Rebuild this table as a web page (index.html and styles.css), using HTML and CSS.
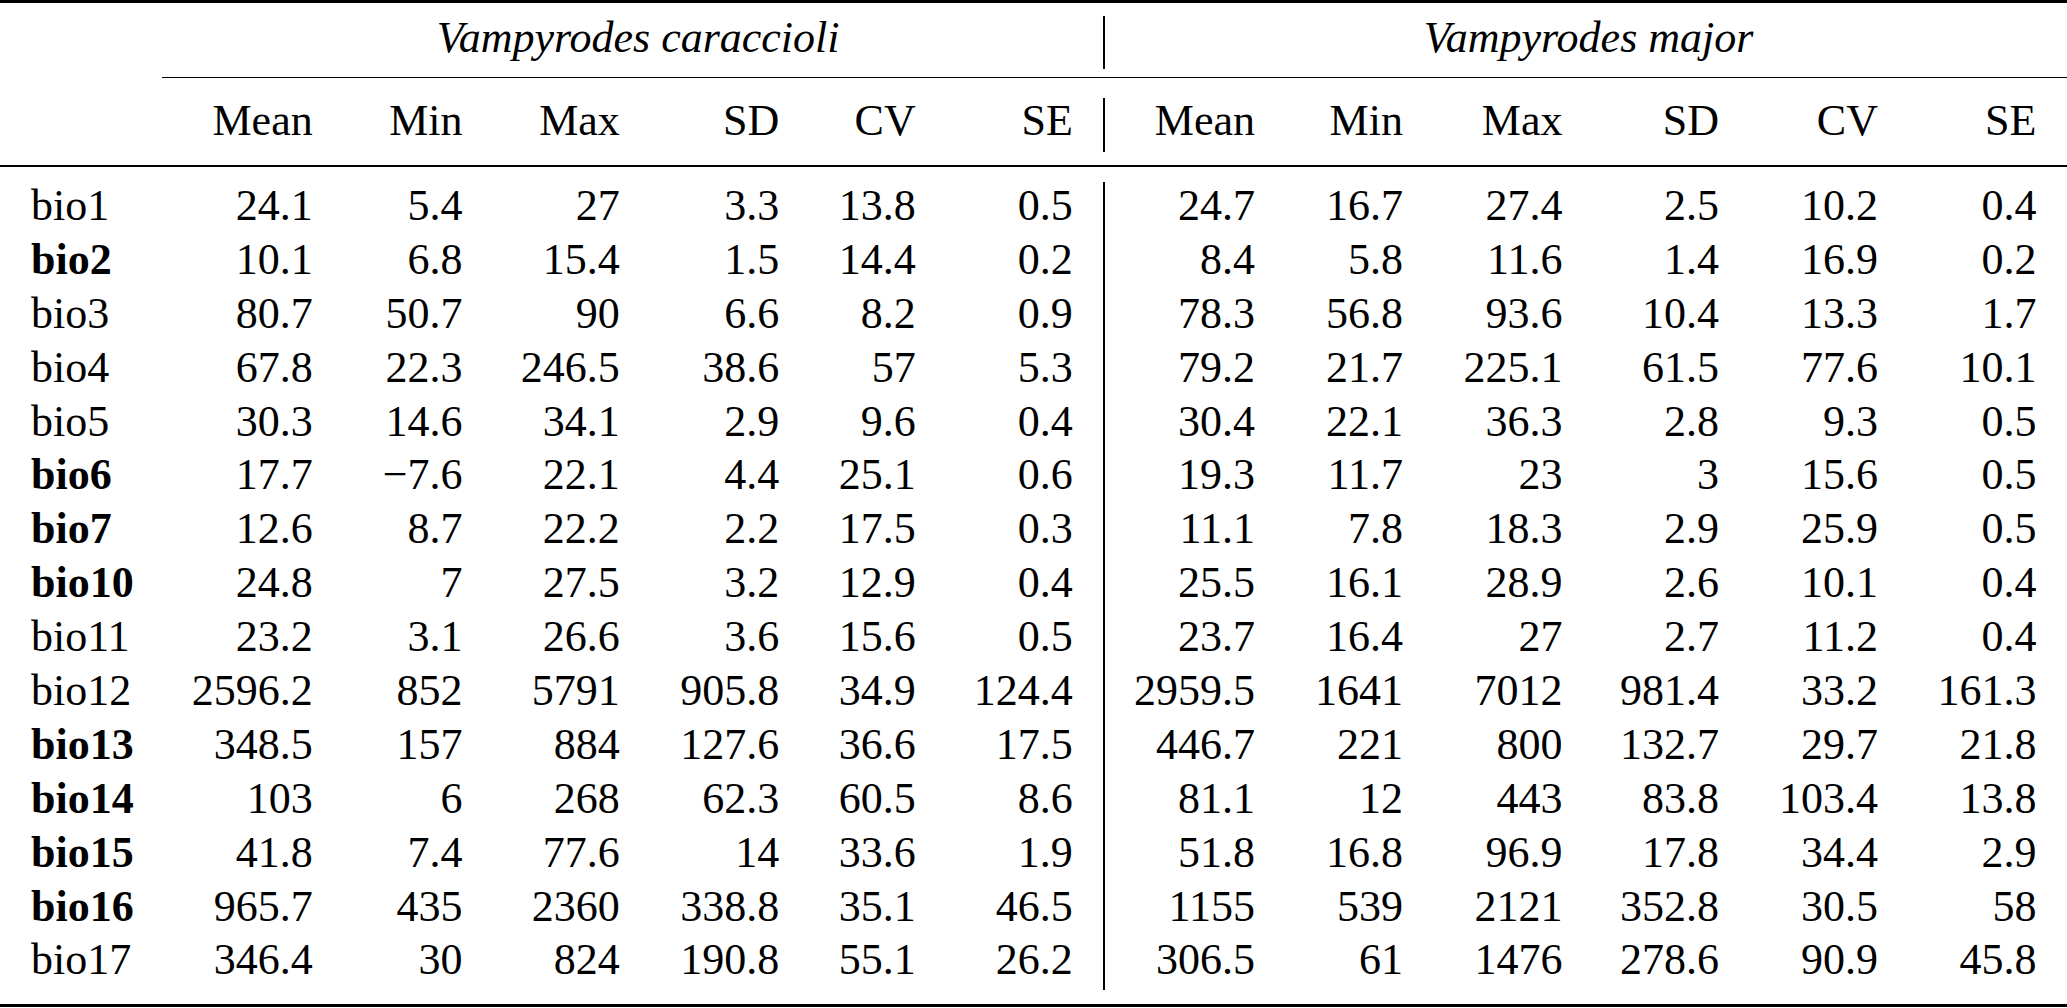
FILE: index.html
```html
<!DOCTYPE html>
<html lang="en">
<head>
<meta charset="utf-8">
<title>Bioclimatic statistics</title>
<link rel="stylesheet" href="styles.css">
</head>
<body>
<div class="stats">
  <div class="hr hr-top"></div>
  <div class="hgrid sp-line">
    <div class="c"></div>
    <div class="c sp sp-a">Vampyrodes caraccioli</div>
    <div class="vl"></div>
    <div class="c sp sp-b">Vampyrodes major</div>
  </div>
  <div class="hr hr-cmid"></div>
  <div class="hgrid ch-line">
    <div class="c"></div>
    <div class="c n">Mean</div><div class="c n">Min</div><div class="c n">Max</div><div class="c n">SD</div><div class="c n">CV</div><div class="c n e">SE</div>
    <div class="vl"></div>
    <div class="c n">Mean</div><div class="c n">Min</div><div class="c n">Max</div><div class="c n">SD</div><div class="c n">CV</div><div class="c n e">SE</div>
  </div>
  <div class="hr hr-mid"></div>
  <div class="dgrid">
    <div class="vl vl-data"></div>
    <div class="ln"><div class="c lab">bio1</div><div class="c n">24.1</div><div class="c n">5.4</div><div class="c n">27</div><div class="c n">3.3</div><div class="c n">13.8</div><div class="c n e">0.5</div><div class="c n">24.7</div><div class="c n">16.7</div><div class="c n">27.4</div><div class="c n">2.5</div><div class="c n">10.2</div><div class="c n e">0.4</div></div>
    <div class="ln"><div class="c lab b">bio2</div><div class="c n">10.1</div><div class="c n">6.8</div><div class="c n">15.4</div><div class="c n">1.5</div><div class="c n">14.4</div><div class="c n e">0.2</div><div class="c n">8.4</div><div class="c n">5.8</div><div class="c n">11.6</div><div class="c n">1.4</div><div class="c n">16.9</div><div class="c n e">0.2</div></div>
    <div class="ln"><div class="c lab">bio3</div><div class="c n">80.7</div><div class="c n">50.7</div><div class="c n">90</div><div class="c n">6.6</div><div class="c n">8.2</div><div class="c n e">0.9</div><div class="c n">78.3</div><div class="c n">56.8</div><div class="c n">93.6</div><div class="c n">10.4</div><div class="c n">13.3</div><div class="c n e">1.7</div></div>
    <div class="ln"><div class="c lab">bio4</div><div class="c n">67.8</div><div class="c n">22.3</div><div class="c n">246.5</div><div class="c n">38.6</div><div class="c n">57</div><div class="c n e">5.3</div><div class="c n">79.2</div><div class="c n">21.7</div><div class="c n">225.1</div><div class="c n">61.5</div><div class="c n">77.6</div><div class="c n e">10.1</div></div>
    <div class="ln"><div class="c lab">bio5</div><div class="c n">30.3</div><div class="c n">14.6</div><div class="c n">34.1</div><div class="c n">2.9</div><div class="c n">9.6</div><div class="c n e">0.4</div><div class="c n">30.4</div><div class="c n">22.1</div><div class="c n">36.3</div><div class="c n">2.8</div><div class="c n">9.3</div><div class="c n e">0.5</div></div>
    <div class="ln"><div class="c lab b">bio6</div><div class="c n">17.7</div><div class="c n">&minus;7.6</div><div class="c n">22.1</div><div class="c n">4.4</div><div class="c n">25.1</div><div class="c n e">0.6</div><div class="c n">19.3</div><div class="c n">11.7</div><div class="c n">23</div><div class="c n">3</div><div class="c n">15.6</div><div class="c n e">0.5</div></div>
    <div class="ln"><div class="c lab b">bio7</div><div class="c n">12.6</div><div class="c n">8.7</div><div class="c n">22.2</div><div class="c n">2.2</div><div class="c n">17.5</div><div class="c n e">0.3</div><div class="c n">11.1</div><div class="c n">7.8</div><div class="c n">18.3</div><div class="c n">2.9</div><div class="c n">25.9</div><div class="c n e">0.5</div></div>
    <div class="ln"><div class="c lab b">bio10</div><div class="c n">24.8</div><div class="c n">7</div><div class="c n">27.5</div><div class="c n">3.2</div><div class="c n">12.9</div><div class="c n e">0.4</div><div class="c n">25.5</div><div class="c n">16.1</div><div class="c n">28.9</div><div class="c n">2.6</div><div class="c n">10.1</div><div class="c n e">0.4</div></div>
    <div class="ln"><div class="c lab">bio11</div><div class="c n">23.2</div><div class="c n">3.1</div><div class="c n">26.6</div><div class="c n">3.6</div><div class="c n">15.6</div><div class="c n e">0.5</div><div class="c n">23.7</div><div class="c n">16.4</div><div class="c n">27</div><div class="c n">2.7</div><div class="c n">11.2</div><div class="c n e">0.4</div></div>
    <div class="ln"><div class="c lab">bio12</div><div class="c n">2596.2</div><div class="c n">852</div><div class="c n">5791</div><div class="c n">905.8</div><div class="c n">34.9</div><div class="c n e">124.4</div><div class="c n">2959.5</div><div class="c n">1641</div><div class="c n">7012</div><div class="c n">981.4</div><div class="c n">33.2</div><div class="c n e">161.3</div></div>
    <div class="ln"><div class="c lab b">bio13</div><div class="c n">348.5</div><div class="c n">157</div><div class="c n">884</div><div class="c n">127.6</div><div class="c n">36.6</div><div class="c n e">17.5</div><div class="c n">446.7</div><div class="c n">221</div><div class="c n">800</div><div class="c n">132.7</div><div class="c n">29.7</div><div class="c n e">21.8</div></div>
    <div class="ln"><div class="c lab b">bio14</div><div class="c n">103</div><div class="c n">6</div><div class="c n">268</div><div class="c n">62.3</div><div class="c n">60.5</div><div class="c n e">8.6</div><div class="c n">81.1</div><div class="c n">12</div><div class="c n">443</div><div class="c n">83.8</div><div class="c n">103.4</div><div class="c n e">13.8</div></div>
    <div class="ln"><div class="c lab b">bio15</div><div class="c n">41.8</div><div class="c n">7.4</div><div class="c n">77.6</div><div class="c n">14</div><div class="c n">33.6</div><div class="c n e">1.9</div><div class="c n">51.8</div><div class="c n">16.8</div><div class="c n">96.9</div><div class="c n">17.8</div><div class="c n">34.4</div><div class="c n e">2.9</div></div>
    <div class="ln"><div class="c lab b">bio16</div><div class="c n">965.7</div><div class="c n">435</div><div class="c n">2360</div><div class="c n">338.8</div><div class="c n">35.1</div><div class="c n e">46.5</div><div class="c n">1155</div><div class="c n">539</div><div class="c n">2121</div><div class="c n">352.8</div><div class="c n">30.5</div><div class="c n e">58</div></div>
    <div class="ln"><div class="c lab">bio17</div><div class="c n">346.4</div><div class="c n">30</div><div class="c n">824</div><div class="c n">190.8</div><div class="c n">55.1</div><div class="c n e">26.2</div><div class="c n">306.5</div><div class="c n">61</div><div class="c n">1476</div><div class="c n">278.6</div><div class="c n">90.9</div><div class="c n e">45.8</div></div>
  </div>
  <div class="hr hr-bottom"></div>
</div>
</body>
</html>
```

FILE: styles.css
```css
body {
  margin: 0;
  font-size: 44px;
  font-family: "Liberation Serif", serif;
}

.stats {
  width: 2067px;
  height: 1008px;
  overflow: hidden;
  display: flex;
  flex-direction: column;
  color: #000;
  background: #fff;
  font-family: "Liberation Serif", serif;
  font-size: 44px;
}

.hr {
  background: #000;
  flex: none;
}

.hr-top {
  height: 2.5px;
  margin-bottom: 13.5px;
}

.hr-cmid {
  height: 1.3px;
  margin-left: 162px;
  margin-top: 8px;
  margin-bottom: 19.7px;
}

.hr-mid {
  height: 2.3px;
  margin-top: 13px;
  margin-bottom: 14.7px;
}

.hr-bottom {
  height: 3px;
  margin-top: 14px;
}

.hgrid {
  display: grid;
  grid-template-columns: 162px 150.7px 149.8px 157.3px 159.5px 136.4px 187.6px 2px 149.7px 148px 159.5px 156.5px 159px 189px;
  flex: none;
}

.sp-line {
  height: 53px;
  line-height: 44.3px;
}

.ch-line {
  height: 54px;
  line-height: 46.3px;
}

.sp {
  font-style: italic;
  text-align: center;
}

.sp-a {
  grid-column: 2 / span 6;
  padding-left: 11px;
}

.sp-b {
  grid-column: 9 / span 6;
  padding-left: 5px;
}

.vl {
  background: #000;
}

.dgrid {
  display: grid;
  grid-template-columns: 162px 150.7px 149.8px 157.3px 159.5px 136.4px 187.6px 2px 149.7px 148px 159.5px 156.5px 159px 189px;
  grid-auto-rows: 53.9px;
  line-height: 47.7px;
  flex: none;
}

.vl-data {
  grid-column: 8;
  grid-row: 1 / span 15;
}

.ln {
  display: contents;
}

.c {
  white-space: nowrap;
  font-family: "Liberation Serif", serif;
}

.lab {
  padding-left: 31px;
}

.b {
  font-weight: bold;
}

.n {
  text-align: right;
}

.e {
  padding-right: 30.5px;
}
```
